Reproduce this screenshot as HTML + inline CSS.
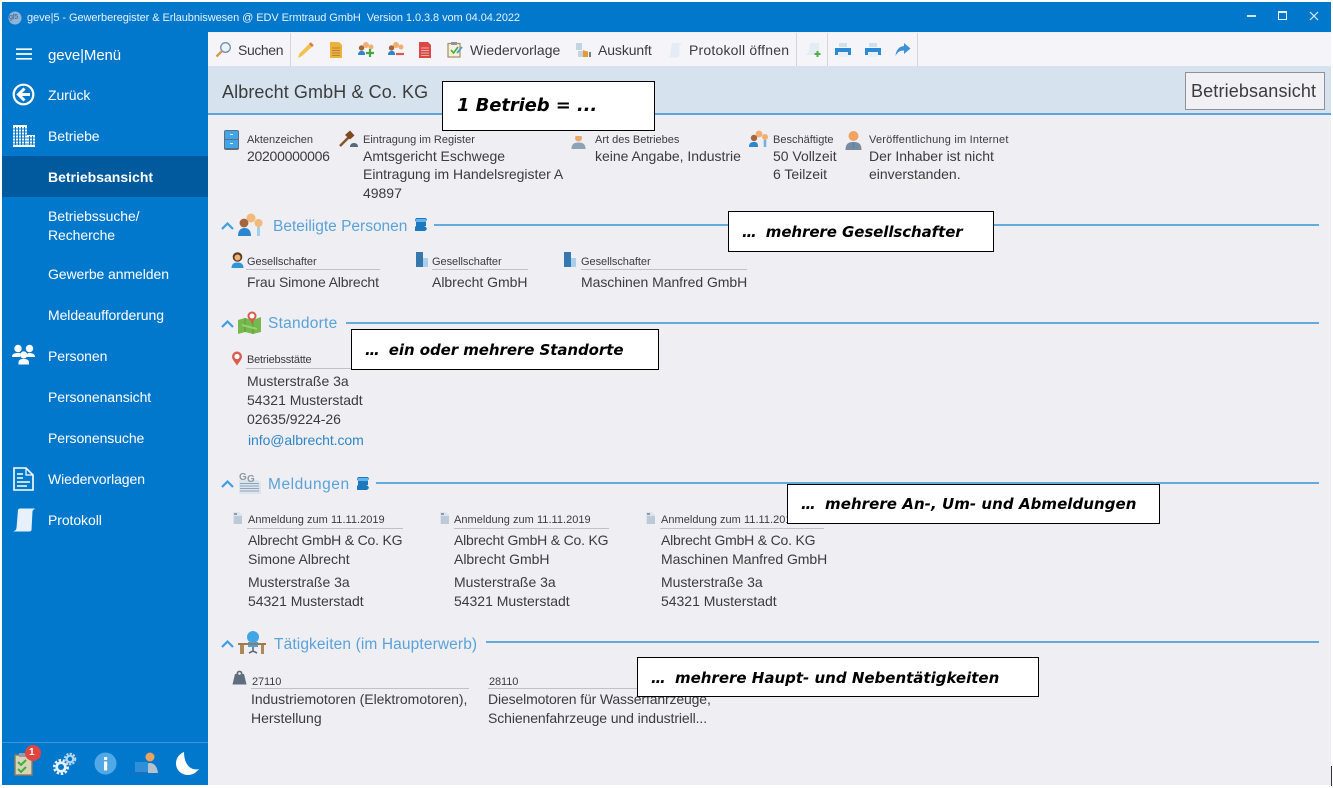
<!DOCTYPE html>
<html lang="de"><head><meta charset="utf-8"><title>gevel5</title>
<style>
html,body{margin:0;padding:0;background:#fff;width:1333px;height:788px;overflow:hidden}
body{font-family:"Liberation Sans",sans-serif;position:relative}
div,span,svg{position:absolute}
.t{white-space:nowrap;color:#3c3c3c;font-size:14px;line-height:18px;letter-spacing:-.02px}
.s{white-space:nowrap;color:#3c3c3c;font-size:11px;line-height:14px}
.n{white-space:nowrap;color:#fff;font-size:14px;line-height:18px;letter-spacing:-.08px}
.h{white-space:nowrap;color:#5aa2d8;font-size:15.5px;line-height:20px}
.tb{white-space:nowrap;color:#3c3c3c;font-size:14px;line-height:18px;top:41px}
.box{background:#fff;border:1px solid #000;box-sizing:border-box;white-space:nowrap;color:#000;font-style:italic;font-weight:bold;font-family:"DejaVu Sans",sans-serif}
.box b{letter-spacing:-1.2px}
.l{height:2px;background:#64aadb}
.u{height:1px;background:#c0c2c6}
.sep{width:1px;top:33px;height:33px;background:#d6d6da}
</style></head><body>
<!-- window -->
<div style="left:2px;top:2px;width:1329px;height:783px;background:#eeeef3"></div>
<div style="left:2px;top:2px;width:1329px;height:30px;background:#0278cc"></div>
<div style="left:2px;top:32px;width:206px;height:753px;background:#0278cc"></div>
<div style="left:2px;top:156px;width:206px;height:41px;background:#015a9e"></div>
<div style="left:2px;top:742px;width:206px;height:1px;background:#3a96d8"></div>
<div style="left:208px;top:33px;width:1123px;height:33px;background:#f5f5f9"></div>
<div style="left:208px;top:66px;width:1123px;height:47px;background:#d6e3ef"></div>
<div style="left:208px;top:113px;width:1123px;height:2px;background:#5ba5d8"></div>
<div style="left:1331px;top:766px;width:1px;height:20px;background:#333"></div>
<!-- title -->
<svg style="left:8px;top:11px" width="14" height="14"><circle cx="7" cy="7" r="6.5" fill="#8fb4d6"/></svg>
<span class="n" style="left:9px;top:13px;font-size:7px;line-height:10px;color:#2d5a85">gl5</span>
<span class="n" style="left:27px;top:11px;font-size:11px;line-height:15px;letter-spacing:-.07px;color:#e6f1fa">geve|5 - Gewerberegister &amp; Erlaubniswesen @ EDV Ermtraud GmbH&nbsp; Version 1.0.3.8 vom 04.04.2022</span>
<div style="left:1247px;top:15px;width:9px;height:2px;background:#cfe3f3"></div>
<div style="left:1278px;top:11px;width:9px;height:9px;border:1px solid #e6f1fa;border-top-width:2px;box-sizing:border-box"></div>
<svg style="left:1309px;top:11px" width="10" height="10"><path d="M1 1L9 9M9 1L1 9" stroke="#dcecf8" stroke-width="1.2"/></svg>
<!-- sidebar -->
<svg style="left:16px;top:48px" width="16" height="12"><path d="M0 1.2H16M0 6H16M0 10.8H16" stroke="#fff" stroke-width="1.7"/></svg>
<span class="n" style="left:48px;top:47px;font-size:15px;letter-spacing:-.1px">geve|Menü</span>
<svg style="left:12px;top:83px" width="24" height="24"><circle cx="11.500" cy="11.500" r="9.800" fill="none" stroke="#fff" stroke-width="2.2"/><path d="M12.500 5.500L6.500 11.500L12.500 17.500M7 11.500H18" fill="none" stroke="#fff" stroke-width="3"/></svg>
<span class="n" style="left:48px;top:86px">Zurück</span>
<svg style="left:12px;top:124px" width="24" height="24"><path d="M1 1H15V23H1ZM15 11H23V23H15Z" fill="#fff"/><path d="M3.500 3V21M6.500 3V21M9.500 3V21M12.500 3V21M1 5H15M1 8H15M1 11H15M1 14H23M1 17H23M1 20H23M17.500 12V21M20.500 12V21" stroke="#0278cc" stroke-width="1"/></svg>
<span class="n" style="left:48px;top:127px">Betriebe</span>
<span class="n" style="left:48px;top:168px;font-weight:bold;letter-spacing:0">Betriebsansicht</span>
<span class="n" style="left:48px;top:207px">Betriebssuche/</span>
<span class="n" style="left:48px;top:226px">Recherche</span>
<span class="n" style="left:48px;top:265px">Gewerbe anmelden</span>
<span class="n" style="left:48px;top:306px">Meldeaufforderung</span>
<svg style="left:12px;top:344px" width="24" height="22" fill="#fff"><circle cx="6" cy="4.500" r="3.700"/><circle cx="17.500" cy="4.500" r="3.700"/><path d="M0 13C0 10 2 9 6 9S8 10 8 13ZM15 13C15 10 15 9 17.500 9S23 10 23 13Z"/><circle cx="11.700" cy="11" r="3.600"/><path d="M6.500 20.500C6 16 8 15 11.700 15S17.500 16 17 20.500Z"/></svg>
<span class="n" style="left:48px;top:347px">Personen</span>
<span class="n" style="left:48px;top:388px">Personenansicht</span>
<span class="n" style="left:48px;top:429px">Personensuche</span>
<svg style="left:13px;top:467px" width="21" height="24"><path d="M1 1H13L20 8V23H1Z" fill="none" stroke="#fff" stroke-width="1.600"/><path d="M13 1V8H20" fill="none" stroke="#fff" stroke-width="1.200"/><path d="M4 7H10M4 11H10M4 15H17M4 19H14" stroke="#fff" stroke-width="1.500"/></svg>
<span class="n" style="left:48px;top:470px">Wiedervorlagen</span>
<svg style="left:12px;top:508px" width="24" height="24"><path d="M6 2C6 .5 8 .5 9 .5H23C22 1.500 21 2 20.500 3L19.500 22C19.500 23 18 23.500 17 23.500H1C3 23 4 22 4.500 20Z" fill="#e6f1fb"/></svg>
<span class="n" style="left:48px;top:511px">Protokoll</span>
<!-- sidebar bottom -->
<svg style="left:14px;top:752px" width="20" height="24"><rect x="1" y="3" width="17" height="20" fill="#d8d4b8" stroke="#8d7b5e" stroke-width="1.400"/><rect x="5" y="1" width="8" height="4" fill="#99a"/><path d="M4 10L7 13L12 8M4 17L7 20L12 15" fill="none" stroke="#3fae3a" stroke-width="2"/></svg>
<svg style="left:25px;top:745px" width="16" height="16"><circle cx="8" cy="8" r="8" fill="#e0453f"/></svg>
<span class="n" style="left:29px;top:746px;font-size:10px;line-height:13px;font-weight:bold">1</span>
<svg style="left:53px;top:752px" width="24" height="24"><circle cx="8" cy="15" r="6.800" fill="none" stroke="#e8f2fa" stroke-width="2.400" stroke-dasharray="2.500 1.700"/><circle cx="8" cy="15" r="4.300" fill="none" stroke="#e8f2fa" stroke-width="2.600"/><circle cx="17" cy="7" r="5.300" fill="none" stroke="#b5d6ee" stroke-width="2" stroke-dasharray="2.200 1.300"/><circle cx="17" cy="7" r="3.300" fill="none" stroke="#b5d6ee" stroke-width="2.200"/></svg>
<svg style="left:94px;top:752px" width="24" height="24"><circle cx="11.500" cy="11.500" r="11" fill="#51a8e6"/><rect x="10" y="9.500" width="3.200" height="9" fill="#fff"/><rect x="10" y="5" width="3.200" height="3" fill="#fff"/></svg>
<svg style="left:134px;top:751px" width="26" height="25"><circle cx="16" cy="6" r="4.500" fill="#eda25d"/><path d="M10 22C10 14 13 12 16 12S23 14 24 22Z" fill="#b5c1cc"/><rect x="1" y="11" width="13" height="10" fill="#2f8fd8"/><path d="M1 21H14V23H1Z" fill="#1d6fb1"/></svg>
<svg style="left:175px;top:751px" width="26" height="25"><path d="M9 1C4 3 1 7.500 1 12.500C1 19 6.500 24 13 24C17.500 24 21.500 21.500 24 18C17 20 9 15 9 1Z" fill="#fff"/></svg>
<!-- toolbar -->
<svg style="left:215px;top:41px" width="17" height="17"><circle cx="10.500" cy="6.500" r="4.800" fill="#eaf2fa" stroke="#6f8fae" stroke-width="1.300"/><path d="M7 10L1.500 15.500" stroke="#d19a52" stroke-width="2.400"/></svg>
<span class="tb" style="left:238px;letter-spacing:-.4px">Suchen</span>
<div class="sep" style="left:290px"></div>
<svg style="left:297px;top:41px" width="18" height="18"><path d="M14 1L17 4L5 15L1 17L2.500 12.500Z" fill="#f2c14e"/><path d="M13.500 1.500L16.500 4.500L15 6L12 3Z" fill="#e0705a"/></svg>
<svg style="left:330px;top:42px" width="13" height="16"><path d="M0 0H9L12 3V16H0Z" fill="#eeb03f"/><path d="M2 6H10M2 8.500H10M2 11H10M2 13.500H10" stroke="#b9852c"/></svg>
<svg style="left:357px;top:41px" width="18" height="17"><circle cx="9" cy="4" r="3" fill="#efb072"/><circle cx="14" cy="6" r="2.500" fill="#efb072"/><circle cx="4.500" cy="7" r="2.700" fill="#a5663b"/><path d="M1 14C1 10.500 3 10 5 10S8 11 8 14Z" fill="#2a86cf"/><path d="M13 8V16M9 12H17" stroke="#45a644" stroke-width="2.200"/></svg>
<svg style="left:387px;top:41px" width="18" height="17"><circle cx="9" cy="4" r="3" fill="#efb072"/><circle cx="14" cy="6" r="2.500" fill="#efb072"/><circle cx="4.500" cy="7" r="2.700" fill="#a5663b"/><path d="M1 14C1 10.500 3 10 5 10S8 11 8 14Z" fill="#2a86cf"/><path d="M9 13H17" stroke="#dc5a50" stroke-width="2.200"/></svg>
<svg style="left:419px;top:42px" width="13" height="16"><path d="M0 0H9L12 3V16H0Z" fill="#da4a44"/><path d="M2 6H10M2 8.500H10M2 11H10M2 13.500H10" stroke="#f2aaa5"/></svg>
<svg style="left:447px;top:41px" width="16" height="17"><rect x="1" y="2.500" width="12" height="13.500" fill="#f7efd8" stroke="#a98c5e" stroke-width="1.200"/><rect x="4" y="1" width="6" height="3" fill="#8895a2"/><path d="M4 9L6.500 12L11 6" fill="none" stroke="#3fae3a" stroke-width="1.600"/><path d="M15 6L10 12" stroke="#4a9ede" stroke-width="1.800"/></svg>
<span class="tb" style="left:470px">Wiedervorlage</span>
<svg style="left:575px;top:42px" width="18" height="16"><path d="M1 1H7V8H1Z" fill="#c4d4e4"/><path d="M3 9H13V15H3Z" fill="#c7d3de"/><path d="M8 8L13 10V15H8Z" fill="#e69a3e"/><path d="M15 10V15" stroke="#555" stroke-width="1.500"/></svg>
<span class="tb" style="left:598px;letter-spacing:-.1px">Auskunft</span>
<svg style="left:667px;top:42px" width="15" height="16"><path d="M5 1H15L12.500 3V14C12 15 11 15.500 10 15.500H0C2 15 3 14 3 13Z" fill="#e4edf6"/></svg>
<span class="tb" style="left:689px;letter-spacing:.2px">Protokoll öffnen</span>
<div class="sep" style="left:796px"></div>
<svg style="left:804px;top:42px" width="18" height="16"><path d="M6 1H15V13H1C3 12 4 11 5 9Z" fill="#e4edf6"/><path d="M13.500 9V15M10.500 12H16.500" stroke="#53ad4c" stroke-width="2"/></svg>
<div class="sep" style="left:827px"></div>
<svg style="left:835px;top:43px" width="16" height="14"><path d="M4 0H12V4H4Z" fill="#cfe0ee"/><path d="M0 5H16V12H0Z" fill="#2c8ad4"/><path d="M3 9H13V14H3Z" fill="#e7f0f8"/></svg>
<svg style="left:865px;top:43px" width="16" height="14"><path d="M4 0H12V4H4Z" fill="#cfe0ee"/><path d="M0 5H16V12H0Z" fill="#2c8ad4"/><path d="M3 9H13V14H3Z" fill="#e7f0f8"/></svg>
<svg style="left:895px;top:43px" width="16" height="14"><path d="M9 0L15.500 5.500L9 11V7.500C5 7.500 2.500 9 .5 13C1 7 4 3.500 9 3Z" fill="#3d92d8"/></svg>
<div class="sep" style="left:917px"></div>
<!-- header -->
<span class="t" style="left:222px;top:82px;font-size:18px;line-height:21px;letter-spacing:.1px">Albrecht GmbH &amp; Co. KG</span>
<div style="left:1185px;top:72px;width:140px;height:38px;background:#f0f0f5;border:1px solid #8d9298;box-sizing:border-box"></div>
<span class="t" style="left:1191px;top:81px;font-size:18px;line-height:21px;letter-spacing:.14px">Betriebsansicht</span>
<div class="box" style="left:442px;top:81px;width:213px;height:50px;font-size:18px;line-height:47px;padding-left:14px;letter-spacing:-.1px">1 Betrieb = ...</div>
<!-- top facts -->
<svg style="left:224px;top:130px" width="15" height="20"><rect width="15" height="20" rx="2" fill="#5b6f80"/><rect x="1" y="1" width="13" height="8" fill="#42a5e8"/><rect x="1" y="10" width="13" height="8" fill="#42a5e8"/><path d="M6 4.500H9M6 13.500H9" stroke="#dff" stroke-width="1"/></svg>
<span class="s" style="left:247px;top:133px">Aktenzeichen</span>
<span class="t" style="left:247px;top:147px;letter-spacing:-.27px">20200000006</span>
<svg style="left:339px;top:130px" width="20" height="18"><path d="M1 16L10 7" stroke="#8a5428" stroke-width="2.600"/><path d="M6 5L11 0.500L15.500 5.500L11 9.500Z" fill="#7d4a22"/><path d="M11 17C11 14 13 13 15 13S19 14 19 17Z" fill="#58697a"/></svg>
<span class="s" style="left:363px;top:133px">Eintragung im Register</span>
<span class="t" style="left:363px;top:147px">Amtsgericht Eschwege</span>
<span class="t" style="left:363px;top:165px">Eintragung im Handelsregister A</span>
<span class="t" style="left:363px;top:184px">49897</span>
<svg style="left:571px;top:133px" width="15" height="17"><circle cx="7.500" cy="5" r="3.500" fill="#eaa868"/><path d="M3.500 3A4 3 0 0 1 11.500 3Z" fill="#f3f3f3"/><path d="M0.500 16C.5 11 3 9.500 7.500 9.500S14.500 11 14.500 16Z" fill="#8ca2b5"/></svg>
<span class="s" style="left:595px;top:133px">Art des Betriebes</span>
<span class="t" style="left:595px;top:147px">keine Angabe, Industrie</span>
<svg style="left:749px;top:130px" width="20" height="20"><circle cx="10" cy="4" r="3.400" fill="#efb072"/><circle cx="16" cy="7" r="3" fill="#efb072"/><circle cx="5" cy="8" r="3.200" fill="#a5663b"/><path d="M0 17C0 13 2 12 5 12S9 13 9 17Z" fill="#2a86cf"/><path d="M16 10V17" stroke="#6cb0e4" stroke-width="2.500"/></svg>
<span class="s" style="left:773px;top:133px">Beschäftigte</span>
<span class="t" style="left:773px;top:147px">50 Vollzeit</span>
<span class="t" style="left:773px;top:165px">6 Teilzeit</span>
<svg style="left:845px;top:130px" width="17" height="20"><circle cx="8.500" cy="6" r="5" fill="#efa45f"/><path d="M0.500 20C.5 14 3 12 8.500 12S16.500 14 16.500 20Z" fill="#7b8b9a"/><path d="M7.500 12H9.500L9.500 18H7.500Z" fill="#3d8fd0"/></svg>
<span class="s" style="left:869px;top:133px;letter-spacing:.21px">Veröffentlichung im Internet</span>
<span class="t" style="left:869px;top:147px">Der Inhaber ist nicht</span>
<span class="t" style="left:869px;top:165px">einverstanden.</span>
<!-- Beteiligte Personen -->
<svg style="left:221px;top:222px" width="13" height="8"><path d="M1 7L6.500 1.500L12 7" fill="none" stroke="#3f9fe0" stroke-width="2.200"/></svg>
<svg style="left:237px;top:212px" width="28" height="26"><circle cx="14" cy="6" r="4.500" fill="#f2b978"/><circle cx="21.500" cy="11" r="4" fill="#f2b978"/><path d="M21.500 15V24" stroke="#9fd0f0" stroke-width="3"/><circle cx="7" cy="11" r="4.400" fill="#a5663b"/><path d="M1 24C1 18 4 16 7.500 16S14 18 14 24Z" fill="#2a86cf"/></svg>
<span class="h" style="left:273px;top:217px">Beteiligte Personen</span>
<svg style="left:414px;top:218px" width="13" height="14"><path d="M2 0H12L13 2L11 4H12V8L10 9H12L13 11L11 13H1V9L2 8V4L1 2Z" fill="#1d78bd"/><path d="M2 1H12V4H2Z" fill="#62b4ea"/></svg>
<div class="l" style="left:434px;top:224px;width:885px"></div>
<div class="box" style="left:728px;top:211px;width:266px;height:41px;font-size:15px;line-height:40px;padding-left:13px;letter-spacing:-.08px"><b>...</b>&nbsp; mehrere Gesellschafter</div>
<svg style="left:231px;top:252px" width="13" height="16"><circle cx="6.500" cy="5" r="4.800" fill="#5c3c1d"/><circle cx="6.500" cy="5.500" r="3" fill="#efb27b"/><path d="M0.500 16C.5 12 3 10.500 6.500 10.500S12.500 12 12.500 16Z" fill="#2e96d8"/></svg>
<span class="s" style="left:247px;top:255px;letter-spacing:-.05px">Gesellschafter</span>
<div class="u" style="left:246px;top:269px;width:134px"></div>
<span class="t" style="left:247px;top:273px;letter-spacing:-.14px">Frau Simone Albrecht</span>
<svg style="left:416px;top:252px" width="12" height="15"><path d="M0 0H7V15H0Z" fill="#3678ad"/><path d="M7 6H12V15H7Z" fill="#a9cfec"/></svg>
<span class="s" style="left:432px;top:255px;letter-spacing:-.05px">Gesellschafter</span>
<div class="u" style="left:432px;top:269px;width:96px"></div>
<span class="t" style="left:432px;top:273px">Albrecht GmbH</span>
<svg style="left:564px;top:252px" width="12" height="15"><path d="M0 0H7V15H0Z" fill="#3678ad"/><path d="M7 6H12V15H7Z" fill="#a9cfec"/></svg>
<span class="s" style="left:581px;top:255px;letter-spacing:-.05px">Gesellschafter</span>
<div class="u" style="left:581px;top:269px;width:166px"></div>
<span class="t" style="left:581px;top:273px;letter-spacing:-.05px">Maschinen Manfred GmbH</span>
<!-- Standorte -->
<svg style="left:221px;top:320px" width="13" height="8"><path d="M1 7L6.500 1.500L12 7" fill="none" stroke="#3f9fe0" stroke-width="2.200"/></svg>
<svg style="left:237px;top:311px" width="25" height="24"><path d="M1 9L8 7L16 9L24 6L24 21L16 23L8 21L1 23Z" fill="#76b84d"/><path d="M8 7V21M16 9V23" stroke="#5d9b3a"/><path d="M5 14L20 18" stroke="#98cf72" stroke-width="2"/><circle cx="15" cy="5" r="3.500" fill="#fff" stroke="#d85a4e" stroke-width="2"/><path d="M12.500 8L15 13L17.500 8Z" fill="#d85a4e"/></svg>
<span class="h" style="left:268px;top:314px;letter-spacing:.25px">Standorte</span>
<div class="l" style="left:346px;top:322px;width:973px"></div>
<svg style="left:231px;top:351px" width="12" height="15"><path d="M6 14.500C3 10 1 8 1 5.500A5 5 0 0 1 11 5.500C11 8 9 10 6 14.500Z" fill="#da5b4f"/><circle cx="6" cy="5.500" r="2.600" fill="#fff"/></svg>
<span class="s" style="left:247px;top:353px;letter-spacing:-.2px">Betriebsstätte</span>
<div class="u" style="left:246px;top:368px;width:105px"></div>
<span class="t" style="left:247px;top:372px">Musterstraße 3a</span>
<span class="t" style="left:247px;top:391px">54321 Musterstadt</span>
<span class="t" style="left:247px;top:410px">02635/9224-26</span>
<span class="t" style="left:248px;top:431px;color:#2f86c8;letter-spacing:-.07px">info@albrecht.com</span>
<div class="box" style="left:351px;top:329px;width:308px;height:41px;font-size:15px;line-height:40px;padding-left:13px;letter-spacing:-.07px"><b>...</b>&nbsp; ein oder mehrere Standorte</div>
<!-- Meldungen -->
<svg style="left:221px;top:480px" width="13" height="8"><path d="M1 7L6.500 1.500L12 7" fill="none" stroke="#3f9fe0" stroke-width="2.200"/></svg>
<svg style="left:238px;top:471px" width="24" height="24"><path d="M1 9H20L23 12V23H1Z" fill="#dbe5ee"/><path d="M2 12.500H21M2 15H21M2 17.500H21M2 20H21" stroke="#90a4b5"/><text x="1" y="9" font-family="Liberation Sans,sans-serif" font-size="10" font-weight="bold" fill="#8d9aa5">G</text><text x="9" y="11" font-family="Liberation Sans,sans-serif" font-size="10" font-weight="bold" fill="#8d9aa5">G</text></svg>
<span class="h" style="left:268px;top:475px;letter-spacing:.55px">Meldungen</span>
<svg style="left:356px;top:477px" width="13" height="14"><path d="M2 0H12L13 2L11 4H12V8L10 9H12L13 11L11 13H1V9L2 8V4L1 2Z" fill="#1d78bd"/><path d="M2 1H12V4H2Z" fill="#62b4ea"/></svg>
<div class="l" style="left:376px;top:482px;width:943px"></div>
<svg style="left:233px;top:512px" width="10" height="13"><path d="M0 0H6L9 3V12H0Z" fill="#dbe5ee"/><path d="M1 5H9M1 7H9M1 9H9M1 11H9" stroke="#9db0c0"/><path d="M1 1H4V3H1Z" fill="#8d9aa5"/></svg>
<span class="s" style="left:248px;top:513px;letter-spacing:.03px">Anmeldung zum 11.11.2019</span>
<div class="u" style="left:247px;top:528px;width:156px"></div>
<span class="t" style="left:248px;top:531px;letter-spacing:-.2px">Albrecht GmbH &amp; Co. KG</span>
<span class="t" style="left:248px;top:550px">Simone Albrecht</span>
<span class="t" style="left:248px;top:573px">Musterstraße 3a</span>
<span class="t" style="left:248px;top:592px">54321 Musterstadt</span>
<svg style="left:440px;top:512px" width="10" height="13"><path d="M0 0H6L9 3V12H0Z" fill="#dbe5ee"/><path d="M1 5H9M1 7H9M1 9H9M1 11H9" stroke="#9db0c0"/><path d="M1 1H4V3H1Z" fill="#8d9aa5"/></svg>
<span class="s" style="left:454px;top:513px;letter-spacing:.03px">Anmeldung zum 11.11.2019</span>
<div class="u" style="left:454px;top:528px;width:155px"></div>
<span class="t" style="left:454px;top:531px;letter-spacing:-.2px">Albrecht GmbH &amp; Co. KG</span>
<span class="t" style="left:454px;top:550px">Albrecht GmbH</span>
<span class="t" style="left:454px;top:573px">Musterstraße 3a</span>
<span class="t" style="left:454px;top:592px">54321 Musterstadt</span>
<svg style="left:646px;top:512px" width="10" height="13"><path d="M0 0H6L9 3V12H0Z" fill="#dbe5ee"/><path d="M1 5H9M1 7H9M1 9H9M1 11H9" stroke="#9db0c0"/><path d="M1 1H4V3H1Z" fill="#8d9aa5"/></svg>
<span class="s" style="left:661px;top:513px;letter-spacing:.03px">Anmeldung zum 11.11.2019</span>
<div class="u" style="left:660px;top:528px;width:164px"></div>
<span class="t" style="left:661px;top:531px;letter-spacing:-.2px">Albrecht GmbH &amp; Co. KG</span>
<span class="t" style="left:661px;top:550px;letter-spacing:-.05px">Maschinen Manfred GmbH</span>
<span class="t" style="left:661px;top:573px">Musterstraße 3a</span>
<span class="t" style="left:661px;top:592px">54321 Musterstadt</span>
<div class="box" style="left:787px;top:484px;width:373px;height:40px;font-size:15px;line-height:39px;padding-left:13px;letter-spacing:.05px"><b>...</b>&nbsp; mehrere An-, Um- und Abmeldungen</div>
<!-- Tätigkeiten -->
<svg style="left:221px;top:640px" width="13" height="8"><path d="M1 7L6.500 1.500L12 7" fill="none" stroke="#3f9fe0" stroke-width="2.200"/></svg>
<svg style="left:237px;top:630px" width="30" height="25"><circle cx="16" cy="7" r="6" fill="#42a5e8"/><path d="M11 12H21V17H11Z" fill="#42a5e8"/><path d="M1 13H29V15H1Z" fill="#9a7a4e"/><path d="M3 15H7V24H3ZM24 15H27V24H24Z" fill="#ab8a58"/><path d="M16 17V21M12 23L16 21L20 23" stroke="#5b6a78" stroke-width="1.600" fill="none"/></svg>
<span class="h" style="left:274px;top:635px;letter-spacing:.12px">Tätigkeiten (im Haupterwerb)</span>
<div class="l" style="left:486px;top:641px;width:833px"></div>
<svg style="left:232px;top:670px" width="15" height="15"><path d="M4.500 4C4.500 1.500 6 .8 7.500 .8S10.500 1.500 10.500 4H12L14.500 14.500H.5L3 4Z" fill="#5f6e7d"/><circle cx="7.500" cy="3.500" r="1.300" fill="#eeeef3"/></svg>
<span class="s" style="left:252px;top:675px;letter-spacing:-.1px">27110</span>
<div class="u" style="left:251px;top:688px;width:218px"></div>
<span class="t" style="left:251px;top:690px">Industriemotoren (Elektromotoren),</span>
<span class="t" style="left:251px;top:709px">Herstellung</span>
<span class="s" style="left:489px;top:675px;letter-spacing:-.1px">28110</span>
<div class="u" style="left:488px;top:688px;width:220px"></div>
<span class="t" style="left:488px;top:690px;letter-spacing:-.14px">Dieselmotoren für Wasserfahrzeuge,</span>
<span class="t" style="left:488px;top:709px;letter-spacing:-.1px">Schienenfahrzeuge und industriell...</span>
<div class="box" style="left:637px;top:657px;width:402px;height:40px;font-size:15px;line-height:40px;padding-left:13px"><b>...</b>&nbsp; mehrere Haupt- und Nebentätigkeiten</div>
</body></html>
